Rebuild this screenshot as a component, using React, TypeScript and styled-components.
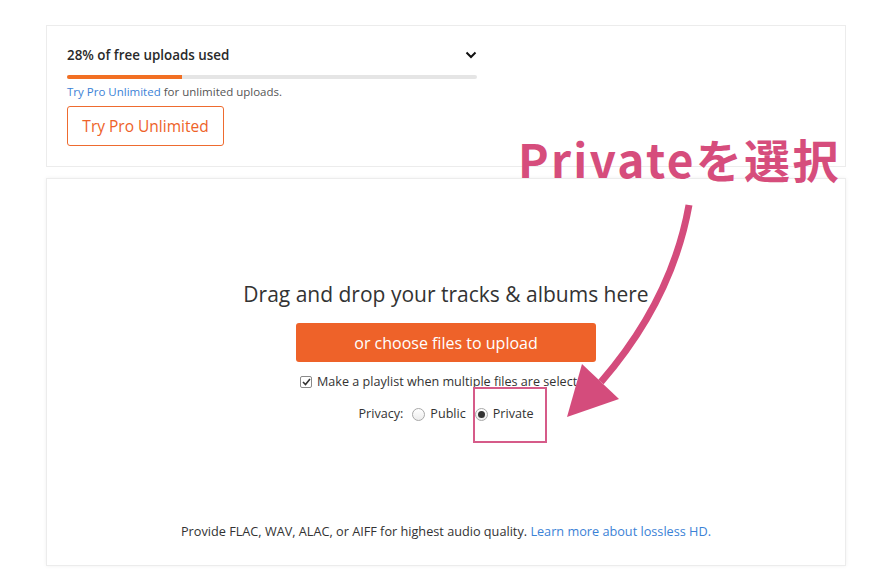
import React from "react";
import styled, { createGlobalStyle } from "styled-components";

const Global = createGlobalStyle`
  html, body { margin: 0; padding: 0; background: #fff; }
  body { font-family: "Open Sans", "Liberation Sans", sans-serif; color: #333; }
`;

const Page = styled.div`
  position: relative;
  width: 878px;
  height: 586px;
  padding: 25px 0 0 46px;
  box-sizing: border-box;
  display: flex;
  flex-direction: column;
  gap: 11px;
`;

const Card = styled.section<{ $h: number; $shadow?: boolean }>`
  width: 800px;
  height: ${(p) => p.$h}px;
  box-sizing: border-box;
  border: 1px solid #ececec;
  background: #fff;
  box-shadow: ${(p) => (p.$shadow ? "0 0 4px rgba(0,0,0,0.06)" : "none")};
`;

const UsageCard = styled(Card)`
  padding: 20px 20px 0 20px;
  display: flex;
  flex-direction: column;
`;

const UsageHead = styled.div`
  width: 410px;
  display: flex;
  align-items: center;
  justify-content: space-between;
  height: 18px;
`;

const UsageTitle = styled.div`
  font-size: 13.4px;
  font-weight: 600;
  color: #2a2a2a;
`;

const Track = styled.div`
  margin-top: 11px;
  width: 410px;
  height: 4px;
  border-radius: 2px;
  background: #e5e5e5;
  overflow: hidden;
`;

const Fill = styled.div`
  height: 100%;
  background: #f26f23;
`;

const Note = styled.div`
  margin-top: 5px;
  font-size: 11.5px;
  color: #555;
  line-height: 16px;
`;

const Link = styled.a`
  color: #3b82d6;
  text-decoration: none;
`;

const OutlineButton = styled.button`
  margin-top: 6px;
  width: 157px;
  height: 40px;
  border: 1px solid #ee6b2f;
  border-radius: 3px;
  background: #fff;
  color: #ee6228;
  font-family: inherit;
  font-size: 15.5px;
  padding: 0;
`;

const DropCard = styled(Card)`
  display: flex;
  flex-direction: column;
  align-items: center;
  padding: 103px 0 26px;
`;

const DropTitle = styled.h2`
  margin: 0;
  font-size: 21px;
  font-weight: 400;
  line-height: 24px;
  color: #333;
`;

const FilledButton = styled.button`
  margin-top: 17px;
  width: 300px;
  height: 39px;
  border: none;
  border-radius: 3px;
  background: #ee6229;
  color: #fff;
  font-family: inherit;
  font-size: 16px;
  padding: 0;
`;

const OptionRow = styled.div<{ $top: number }>`
  margin-top: ${(p) => p.$top}px;
  display: flex;
  align-items: center;
  gap: 5px;
  font-size: 12.6px;
  line-height: 16px;
  color: #333;
`;

const Check = styled.span`
  width: 12px;
  height: 12px;
  box-sizing: border-box;
  border: 1px solid #8a8a8a;
  border-radius: 2px;
  background: #fff;
  display: inline-flex;
  align-items: center;
  justify-content: center;
`;

const Radio = styled.span<{ $on?: boolean }>`
  width: 13px;
  height: 13px;
  box-sizing: border-box;
  border: 1px solid #a8a8a8;
  border-radius: 50%;
  background: linear-gradient(#fff, #ececec);
  display: inline-flex;
  align-items: center;
  justify-content: center;
  margin-left: 4px;
  &::after {
    content: "";
    width: 7px;
    height: 7px;
    border-radius: 50%;
    background: ${(p) => (p.$on ? "#333" : "transparent")};
  }
`;

const Spacer = styled.div`
  flex: 1;
`;

const Footer = styled.div`
  font-size: 12.7px;
  line-height: 16px;
  color: #333;
`;

const Callout = styled.div`
  position: absolute;
  left: 518px;
  top: 128px;
  font-family: "Noto Sans CJK JP", "Noto Sans", sans-serif;
  font-weight: 700;
  font-size: 46px;
  line-height: 60px;
  letter-spacing: 2.3px;
  color: #d64d7c;
  white-space: nowrap;
`;

const Highlight = styled.div`
  position: absolute;
  left: 473px;
  top: 387px;
  width: 74px;
  height: 56px;
  box-sizing: border-box;
  border: 2px solid #d65b89;
`;

const ArrowSvg = styled.svg`
  position: absolute;
  left: 0;
  top: 0;
  pointer-events: none;
`;

export default function App() {
  const used = 28;
  return (
    <>
      <Global />
      <Page>
        <UsageCard $h={142}>
          <UsageHead>
            <UsageTitle>{used}% of free uploads used</UsageTitle>
            <svg width="12" height="8" viewBox="0 0 12 8">
              <path d="M1.5 1.5 L6 6 L10.5 1.5" fill="none" stroke="#111" strokeWidth="2" />
            </svg>
          </UsageHead>
          <Track>
            <Fill style={{ width: `${used}%` }} />
          </Track>
          <Note>
            <Link>Try Pro Unlimited</Link> for unlimited uploads.
          </Note>
          <OutlineButton>Try Pro Unlimited</OutlineButton>
        </UsageCard>
        <DropCard $h={388} $shadow>
          <DropTitle>Drag and drop your tracks &amp; albums here</DropTitle>
          <FilledButton>or choose files to upload</FilledButton>
          <OptionRow $top={12}>
            <Check>
              <svg width="9" height="8" viewBox="0 0 9 8">
                <path d="M1 4 L3.5 6.5 L8 1" fill="none" stroke="#333" strokeWidth="1.6" />
              </svg>
            </Check>
            Make a playlist when multiple files are selected
          </OptionRow>
          <OptionRow $top={16}>
            Privacy:
            <Radio />
            Public
            <Radio $on />
            Private
          </OptionRow>
          <Spacer />
          <Footer>
            Provide FLAC, WAV, ALAC, or AIFF for highest audio quality.{" "}
            <Link>Learn more about lossless HD.</Link>
          </Footer>
        </DropCard>
        <Callout>Privateを選択</Callout>
        <Highlight />
        <ArrowSvg width="878" height="586" viewBox="0 0 878 586">
          <path d="M689 205 Q672 300 601 382" fill="none" stroke="#d44c7c" strokeWidth="7" />
          <polygon points="567,417 582,364 619,399" fill="#d44c7c" />
        </ArrowSvg>
      </Page>
    </>
  );
}
